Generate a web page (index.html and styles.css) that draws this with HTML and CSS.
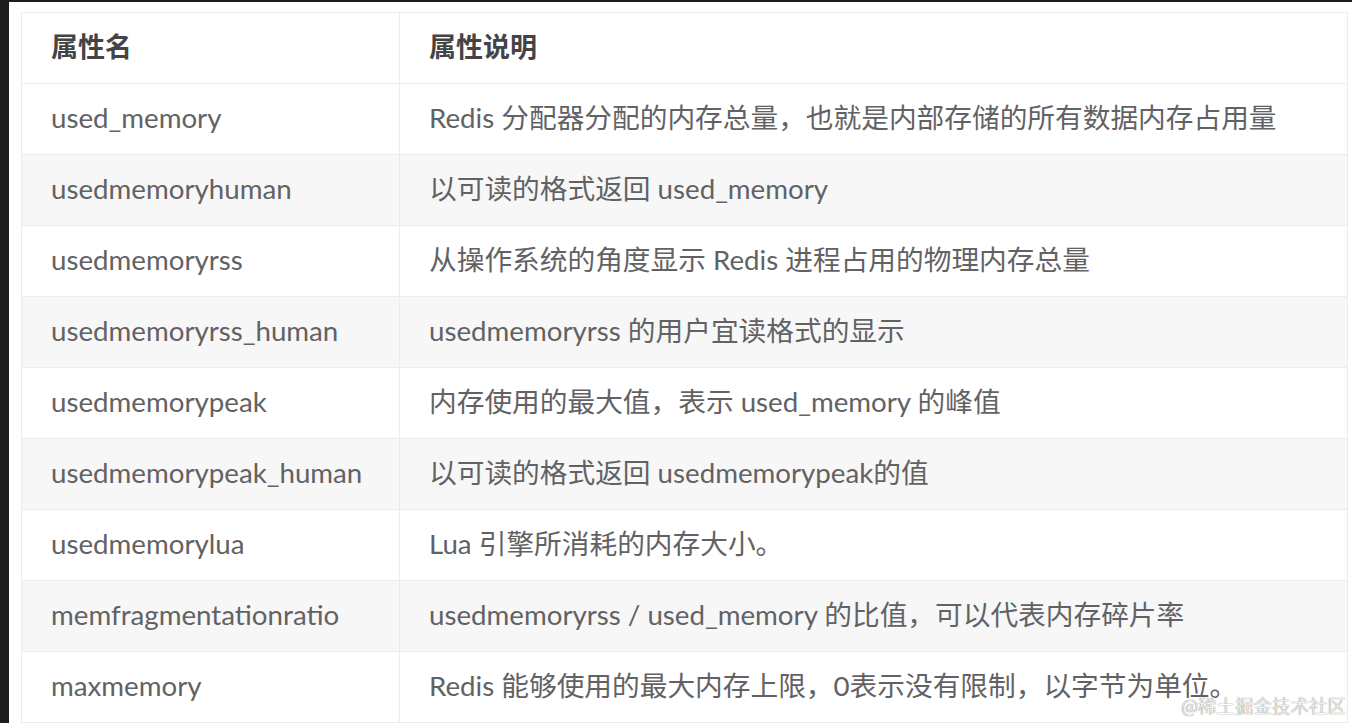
FILE: index.html
```html
<!DOCTYPE html>
<html lang="zh-CN">
<head>
<meta charset="utf-8">
<title>Redis 内存属性</title>
<link rel="stylesheet" href="styles.css">
</head>
<body>
<div class="frame">
  <div class="sheet">
    <table class="attrs">
      <thead>
        <tr><th class="c-name">属性名</th><th class="c-desc">属性说明</th></tr>
      </thead>
      <tbody>
        <tr><td>used_memory</td><td>Redis 分配器分配的内存总量，也就是内部存储的所有数据内存占用量</td></tr>
        <tr><td>usedmemoryhuman</td><td>以可读的格式返回 used_memory</td></tr>
        <tr><td>usedmemoryrss</td><td>从操作系统的角度显示 Redis 进程占用的物理内存总量</td></tr>
        <tr><td>usedmemoryrss_human</td><td>usedmemoryrss 的用户宜读格式的显示</td></tr>
        <tr><td>usedmemorypeak</td><td>内存使用的最大值，表示 used_memory 的峰值</td></tr>
        <tr><td>usedmemorypeak_human</td><td>以可读的格式返回 usedmemorypeak的值</td></tr>
        <tr><td>usedmemorylua</td><td>Lua 引擎所消耗的内存大小。</td></tr>
        <tr><td>memfragmentationratio</td><td>usedmemoryrss / used_memory 的比值，可以代表内存碎片率</td></tr>
        <tr><td>maxmemory</td><td>Redis 能够使用的最大内存上限，0表示没有限制，以字节为单位。</td></tr>
      </tbody>
    </table>
    <div class="watermark">@稀土掘金技术社区</div>
  </div>
</div>
</body>
</html>
```
FILE: styles.css
```css
html, body {
  margin: 0;
  padding: 0;
  height: 100%;
  overflow: hidden;
  background: #1d1d20;
}

.frame {
  height: 100%;
  padding: 2px 0 0 9px;
  box-sizing: border-box;
}

.sheet {
  position: relative;
  height: 100%;
  background: #ffffff;
  padding: 10px 4px 0 12px;
  box-sizing: border-box;
}

.attrs {
  width: 1327px;
  border-collapse: collapse;
  font-family: Lato, "Noto Sans CJK SC", sans-serif;
  font-size: 27.7px;
  line-height: 34px;
  color: #626264;
}

.attrs th,
.attrs td {
  height: 68px;
  padding: 0 0 2px 29px;
  text-align: left;
  vertical-align: middle;
  border: 1px solid #ececec;
  white-space: nowrap;
}

.attrs th {
  font-weight: 700;
  color: #444446;
  font-size: 27px;
}

.attrs .c-name {
  width: 348px;
}

.attrs tbody tr:nth-child(even) td {
  background: #f7f7f8;
}

.watermark {
  position: absolute;
  right: 6px;
  bottom: 7px;
  font-family: "Noto Sans CJK SC", sans-serif;
  font-weight: 300;
  font-size: 18.5px;
  line-height: 22px;
  color: #ffffff;
  text-shadow: 0 0 1px #7a7a7a, 0 0 1px #7a7a7a;
}
```
